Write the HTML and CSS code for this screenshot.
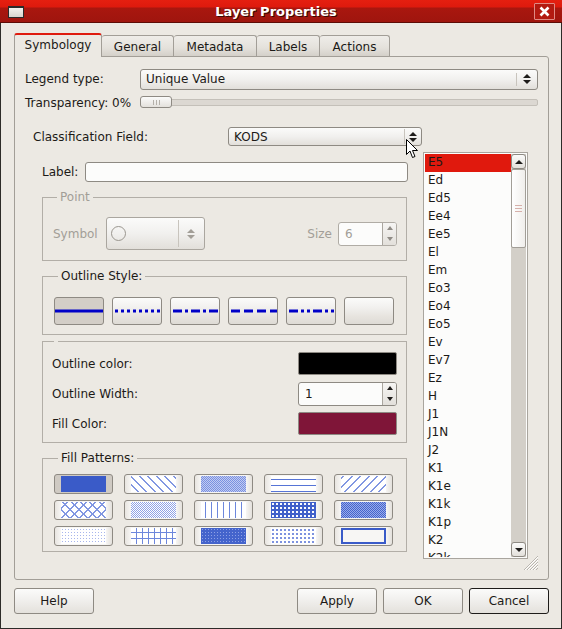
FILE: index.html
```html
<!DOCTYPE html>
<html lang="en">
<head>
    <meta charset="UTF-8">
    <title>Layer Properties</title>
    <link rel="stylesheet" href="styles.css">
</head>
<body>
    <div class="window">
        <div class="titlebar">
            <div class="win-icon"></div>
            <div class="win-title">Layer Properties</div>
            <div class="win-close">
                <svg width="11" height="11" viewBox="0 0 11 11"><path d="M1.5 1.5 L9.5 9.5 M9.5 1.5 L1.5 9.5" stroke="#fff" stroke-width="2.6"/></svg>
            </div>
        </div>

        <div class="dialog">
            <div class="tabs">
                <div class="tab active" style="width: 88px;">Symbology</div>
                <div class="tab" style="width: 72px;">General</div>
                <div class="tab" style="width: 83px;">Metadata</div>
                <div class="tab" style="width: 63px;">Labels</div>
                <div class="tab" style="width: 70px;">Actions</div>
            </div>

            <div class="panel">
                <div class="legend-row">
                    <div class="row-label">Legend type:</div>
                    <div class="combo wide">
                        <span class="combo-text">Unique Value</span>
                        <span class="combo-arrows"><i class="up"></i><i class="down"></i></span>
                    </div>
                </div>
                <div class="transp-row">
                    <div class="row-label">Transparency: 0%</div>
                    <div class="slider">
                        <div class="groove"></div>
                        <div class="handle"><i></i><i></i><i></i></div>
                    </div>
                </div>

                <div class="main">
                    <div class="left">
                        <div class="class-row">
                            <div class="class-label">Classification Field:</div>
                            <div class="combo field">
                                <span class="combo-text">KODS</span>
                                <span class="combo-arrows"><i class="up"></i><i class="down"></i></span>
                            </div>
                        </div>

                        <div class="sub">
                            <div class="label-row">
                                <span>Label:</span>
                                <div class="text-input"></div>
                            </div>

                            <fieldset class="group point">
                                <legend>Point</legend>
                                <div class="point-row">
                                    <span class="disabled">Symbol</span>
                                    <div class="combo symbol">
                                        <span class="circle"></span>
                                        <span class="combo-arrows"><i class="up"></i><i class="down"></i></span>
                                    </div>
                                    <span class="spacer"></span>
                                    <span class="disabled">Size</span>
                                    <div class="spin size">
                                        <span class="spin-text">6</span>
                                        <span class="spin-btns"><i class="up"></i><i class="down"></i></span>
                                    </div>
                                </div>
                            </fieldset>

                            <fieldset class="group outline">
                                <legend>Outline Style:</legend>
                                <div class="style-row">
                                    <div class="style-btn pressed">
                                        <svg width="48" height="6"><line x1="0" y1="3" x2="48" y2="3" stroke="#0000c8" stroke-width="3"/></svg>
                                    </div>
                                    <div class="style-btn">
                                        <svg width="48" height="6"><line x1="2" y1="3" x2="48" y2="3" stroke="#0000c8" stroke-width="3" stroke-dasharray="3 3"/></svg>
                                    </div>
                                    <div class="style-btn">
                                        <svg width="48" height="6"><line x1="2" y1="3" x2="48" y2="3" stroke="#0000c8" stroke-width="3" stroke-dasharray="9 3 3 3"/></svg>
                                    </div>
                                    <div class="style-btn">
                                        <svg width="48" height="6"><line x1="2" y1="3" x2="48" y2="3" stroke="#0000c8" stroke-width="3" stroke-dasharray="9 4"/></svg>
                                    </div>
                                    <div class="style-btn">
                                        <svg width="48" height="6"><line x1="2" y1="3" x2="48" y2="3" stroke="#0000c8" stroke-width="3" stroke-dasharray="9 3 3 3 3 3"/></svg>
                                    </div>
                                    <div class="style-btn"></div>
                                </div>
                            </fieldset>

                            <fieldset class="group colors">
                                <legend></legend>
                                <div class="color-row">
                                    <span>Outline color:</span>
                                    <div class="swatch" style="background-color: #000000;"></div>
                                </div>
                                <div class="color-row">
                                    <span>Outline Width:</span>
                                    <div class="spin width">
                                        <span class="spin-text">1</span>
                                        <span class="spin-btns"><i class="up"></i><i class="down"></i></span>
                                    </div>
                                </div>
                                <div class="color-row">
                                    <span>Fill Color:</span>
                                    <div class="swatch" style="background-color: #7f1538;"></div>
                                </div>
                            </fieldset>

                            <fieldset class="group fills">
                                <legend>Fill Patterns:</legend>
                                <div class="fill-grid">
                                    <div class="fill-btn pressed"><div class="fp fp-solid"></div></div>
                                    <div class="fill-btn"><div class="fp fp-bdiag"></div></div>
                                    <div class="fill-btn"><div class="fp fp-dense4"></div></div>
                                    <div class="fill-btn"><div class="fp fp-hor"></div></div>
                                    <div class="fill-btn"><div class="fp fp-fdiag"></div></div>
                                    <div class="fill-btn"><div class="fp fp-diagcross"></div></div>
                                    <div class="fill-btn"><div class="fp fp-dense5"></div></div>
                                    <div class="fill-btn"><div class="fp fp-ver"></div></div>
                                    <div class="fill-btn"><div class="fp fp-dense2"></div></div>
                                    <div class="fill-btn"><div class="fp fp-dense3"></div></div>
                                    <div class="fill-btn"><div class="fp fp-dense6"></div></div>
                                    <div class="fill-btn"><div class="fp fp-cross"></div></div>
                                    <div class="fill-btn"><div class="fp fp-dense1"></div></div>
                                    <div class="fill-btn"><div class="fp fp-dense7"></div></div>
                                    <div class="fill-btn"><div class="fp fp-none"></div></div>
                                </div>
                            </fieldset>
                        </div>
                    </div>

                    <div class="value-list">
                        <div class="items">
                            <div class="item selected">E5</div>
                            <div class="item">Ed</div>
                            <div class="item">Ed5</div>
                            <div class="item">Ee4</div>
                            <div class="item">Ee5</div>
                            <div class="item">El</div>
                            <div class="item">Em</div>
                            <div class="item">Eo3</div>
                            <div class="item">Eo4</div>
                            <div class="item">Eo5</div>
                            <div class="item">Ev</div>
                            <div class="item">Ev7</div>
                            <div class="item">Ez</div>
                            <div class="item">H</div>
                            <div class="item">J1</div>
                            <div class="item">J1N</div>
                            <div class="item">J2</div>
                            <div class="item">K1</div>
                            <div class="item">K1e</div>
                            <div class="item">K1k</div>
                            <div class="item">K1p</div>
                            <div class="item">K2</div>
                            <div class="item">K2k</div>
                        </div>
                        <div class="scrollbar">
                            <div class="sb-btn"><i class="up"></i></div>
                            <div class="sb-thumb"><i></i><i></i><i></i></div>
                            <div class="sb-track"></div>
                            <div class="sb-btn"><i class="down"></i></div>
                        </div>
                    </div>
                </div>

                <svg class="grip" width="18" height="18" viewBox="0 0 18 18">
                    <path d="M17 3 L3 17 M17 6 L6 17 M17 9 L9 17 M17 12 L12 17 M17 15 L15 17" stroke="#b9b5ae" stroke-width="1"/>
                    <path d="M17 4 L4 17 M17 7 L7 17 M17 10 L10 17 M17 13 L13 17" stroke="#ffffff" stroke-width="1"/>
                </svg>
            </div>

            <div class="buttons">
                <div class="button">Help</div>
                <div class="spacer"></div>
                <div class="button">Apply</div>
                <div class="button">OK</div>
                <div class="button default">Cancel</div>
            </div>
        </div>

        <svg class="cursor" width="13" height="20" viewBox="0 0 13 20">
            <path d="M0.5 0.5 L0.5 15.5 L4 12 L6.5 18.5 L9 17.5 L6.5 11.5 L11.5 11.5 Z" fill="#ffffff" stroke="#000000" stroke-width="1"/>
        </svg>
    </div>
</body>
</html>
```

FILE: styles.css
```css
body {
    margin: 0;
    padding: 0;
    font-family: "DejaVu Sans", Verdana, sans-serif;
    font-size: 12px;
    color: #1c1a17;
    background-color: #ece9e3;
}
.window {
    width: 562px;
    height: 629px;
    box-sizing: border-box;
    border: 1px solid #2d2b28;
    border-top: none;
    background-color: #ece9e3;
    position: relative;
    display: flex;
    flex-direction: column;
}

/* title bar */
.titlebar {
    height: 23px;
    margin: 0 -1px;
    background: linear-gradient(#e51f10 0, #de1a0d 7px, #a9170f 8px, #9f150e 100%);
    border-bottom: 1px solid #5c0c07;
    box-sizing: border-box;
    display: flex;
    align-items: center;
    position: relative;
}
.win-icon {
    width: 14px;
    height: 9px;
    margin-left: 8px;
    margin-top: 2px;
    background: linear-gradient(#f4f2ee, #d8d4ce);
    border: 1px solid #2a2a2a;
    border-top-width: 2px;
}
.win-title {
    flex: 1;
    text-align: center;
    color: #ffffff;
    font-weight: bold;
    font-size: 13px;
    text-shadow: 1px 1px 0 #3a0703;
    margin-right: 6px;
}
.win-close {
    width: 19px;
    height: 15px;
    margin-right: 7px;
    margin-top: 1px;
    border: 1px solid #e08a84;
    border-radius: 1px;
    background-color: #b31a11;
    display: flex;
    justify-content: center;
    align-items: center;
}

/* dialog body */
.dialog {
    flex: 1;
    padding: 10px 12px 0 13px;
    display: flex;
    flex-direction: column;
}
.tabs {
    display: flex;
    height: 23px;
    align-items: flex-end;
    position: relative;
    z-index: 1;
}
.tab {
    height: 21px;
    box-sizing: border-box;
    border: 1px solid #a29e97;
    border-bottom: none;
    border-left: none;
    border-radius: 3px 3px 0 0;
    background: linear-gradient(#efede9, #e4e1db 60%, #d4d0c9);
    display: flex;
    justify-content: center;
    align-items: center;
    padding-top: 1px;
}
.tab.active {
    height: 24px;
    margin-bottom: -1px;
    border: 1px solid #a29e97;
    border-top: 2px solid #df1b0e;
    border-bottom: none;
    background: #ece9e3;
    padding-top: 0;
    padding-bottom: 2px;
}
.panel {
    height: 524px;
    box-sizing: border-box;
    border: 1px solid #a29e97;
    border-radius: 0 3px 3px 3px;
    padding: 11px 10px 0 10px;
    position: relative;
}
.legend-row {
    display: flex;
    align-items: center;
    height: 22px;
}
.row-label {
    width: 115px;
    flex: none;
}
.transp-row {
    display: flex;
    align-items: center;
    height: 13px;
    margin-top: 6px;
}

/* combos */
.combo {
    box-sizing: border-box;
    border: 1px solid #8e8a83;
    border-radius: 3px;
    background: linear-gradient(#fbfbfa, #f1f0ee 50%, #e2dfda);
    display: flex;
    align-items: center;
    padding-left: 5px;
}
.combo.wide {
    flex: 1;
    height: 21px;
}
.combo-text {
    flex: 1;
}
.combo-arrows {
    width: 20px;
    align-self: stretch;
    margin: 3px 0;
    border-left: 1px solid #c8c4bd;
    display: flex;
    flex-direction: column;
    justify-content: center;
    align-items: center;
    gap: 2px;
}
i.up, i.down {
    display: block;
    width: 0;
    height: 0;
    border-left: 4px solid transparent;
    border-right: 4px solid transparent;
}
i.up {
    border-bottom: 4px solid #1e1c1a;
}
i.down {
    border-top: 4px solid #1e1c1a;
}

/* slider */
.slider {
    flex: 1;
    height: 13px;
    position: relative;
    display: flex;
    align-items: center;
}
.groove {
    flex: 1;
    height: 5px;
    border: 1px solid #c4c0b9;
    background-color: #dcd8d2;
    border-radius: 2px;
}
.handle {
    position: absolute;
    left: 0;
    top: 0;
    width: 32px;
    height: 12px;
    box-sizing: border-box;
    border: 1px solid #8e8a83;
    border-radius: 3px;
    background: linear-gradient(#fbfbfa, #e4e1dc);
    display: flex;
    justify-content: center;
    align-items: center;
    gap: 2px;
}
.handle i {
    width: 1px;
    height: 5px;
    background-color: #b5b1aa;
}

/* main area */
.main {
    display: flex;
    margin-top: 18px;
}
.left {
    width: 397px;
    flex: none;
}
.class-row {
    display: flex;
    align-items: center;
    height: 19px;
}
.class-label {
    width: 195px;
    padding-left: 8px;
}
.combo.field {
    width: 194px;
    height: 19px;
}
.combo.field .combo-arrows {
    margin: 1px 0;
    width: 16px;
}
.sub {
    padding-left: 17px;
    width: 366px;
}
.label-row {
    display: flex;
    align-items: center;
    margin-top: 16px;
    height: 20px;
}
.text-input {
    flex: 1;
    margin-left: 7px;
    height: 20px;
    box-sizing: border-box;
    border: 1px solid #8e8a83;
    border-radius: 3px;
    background-color: #fcfcfb;
}

/* groups */
.group {
    margin: 0;
    width: 365px;
    box-sizing: border-box;
    border: 1px solid #b2aea7;
    padding: 0 9px 0 10px;
}
.group legend {
    padding: 0 3px;
    margin-left: 4px;
    line-height: 14px;
}
.group.point {
    margin-top: 8px;
    padding-top: 13px;
    padding-bottom: 10px;
}
.group.point legend {
    color: #a29e97;
}
.disabled {
    color: #a29e97;
}
.point-row {
    display: flex;
    align-items: center;
}
.point-row .spacer {
    flex: 1;
}
.combo.symbol {
    width: 99px;
    height: 33px;
    margin-left: 8px;
    padding-left: 4px;
    border-color: #aaa69f;
}
.circle {
    flex: 1;
    height: 16px;
    display: block;
    position: relative;
}
.circle::before {
    content: "";
    display: block;
    width: 15px;
    height: 15px;
    border: 1px solid #9a968f;
    border-radius: 50%;
    box-sizing: border-box;
}
.combo.symbol .combo-arrows {
    margin: 2px 0;
    width: 25px;
}
.combo.symbol i.up {
    border-bottom-color: #a29e97;
}
.combo.symbol i.down {
    border-top-color: #a29e97;
}
.spin {
    box-sizing: border-box;
    border: 1px solid #8e8a83;
    border-radius: 3px;
    background-color: #fcfcfb;
    display: flex;
    align-items: stretch;
}
.spin-text {
    flex: 1;
    padding-left: 6px;
    display: flex;
    align-items: center;
}
.spin-btns {
    width: 13px;
    border-left: 1px solid #aaa69f;
    display: flex;
    flex-direction: column;
    background: linear-gradient(#f6f5f3, #e3e0db);
    border-radius: 0 2px 2px 0;
}
.spin-btns i {
    margin: auto;
    border-left-width: 3px;
    border-right-width: 3px;
}
.spin-btns i.up {
    border-bottom-width: 4px;
}
.spin-btns i.down {
    border-top-width: 4px;
}
.spin.size {
    width: 59px;
    height: 24px;
    margin-left: 6px;
    border-color: #b0aca5;
    color: #a29e97;
}
.spin.size i.up {
    border-bottom-color: #8f8b85;
}
.spin.size i.down {
    border-top-color: #8f8b85;
}
.group.outline {
    margin-top: 8px;
    padding-top: 14px;
    padding-bottom: 9px;
    padding-left: 11px;
}
.style-row {
    display: flex;
    gap: 8px;
}
.style-btn {
    width: 50px;
    height: 28px;
    box-sizing: border-box;
    border: 1px solid #8e8a83;
    border-radius: 3px;
    background: linear-gradient(#fbfbfa 0, #f2f1ef 35%, #e7e4df 70%, #dedbd5 100%);
    display: flex;
    justify-content: center;
    align-items: center;
}
.style-btn.pressed {
    background: #d3cec7;
}
.group.colors {
    margin-top: 6px;
    padding-top: 10px;
    padding-bottom: 7px;
    padding-left: 9px;
}
.group.colors legend {
    padding: 0 2px;
    margin-left: 2px;
    line-height: 0;
}
.color-row {
    display: flex;
    align-items: center;
    justify-content: space-between;
    height: 23px;
    margin-bottom: 7px;
}
.color-row:last-child {
    margin-bottom: 0;
}
.swatch {
    width: 99px;
    height: 23px;
    box-sizing: border-box;
    border: 1px solid #8e8a83;
    border-radius: 2px;
}
.spin.width {
    width: 99px;
    height: 24px;
}
.group.fills {
    margin-top: 8px;
    padding-top: 9px;
    padding-bottom: 5px;
    padding-left: 11px;
}
.fill-grid {
    display: grid;
    grid-template-columns: repeat(5, 59px);
    column-gap: 11px;
    row-gap: 6px;
}
.fill-btn {
    height: 20px;
    box-sizing: border-box;
    border: 1px solid #8e8a83;
    border-radius: 3px;
    background: linear-gradient(90deg, #e8e5e0 0, #f7f6f4 6px, #f7f6f4 51px, #e4e1dc 100%);
    padding: 1px 6px;
}
.fill-btn.pressed {
    background: #cfcac3;
}
.fp {
    height: 100%;
    background-color: #ffffff;
}
.fp-solid {
    background-color: #3a5bc8;
}
.fp-bdiag {
    background-image: repeating-linear-gradient(45deg, #ffffff 0 4.5px, #8197e2 4.5px 6px);
}
.fp-fdiag {
    background-image: repeating-linear-gradient(-45deg, #ffffff 0 4.5px, #8197e2 4.5px 6px);
}
.fp-diagcross {
    background-image: repeating-linear-gradient(45deg, transparent 0 5px, #8197e2 5px 6.5px),
        repeating-linear-gradient(-45deg, transparent 0 5px, #8197e2 5px 6.5px);
}
.fp-hor {
    background-image: repeating-linear-gradient(#ffffff 0 3px, #5674d6 3px 4px, #ffffff 4px 6px);
}
.fp-ver {
    background-image: repeating-linear-gradient(90deg, #ffffff 0 4px, #6d87dc 4px 5px, #ffffff 5px 6px);
}
.fp-cross {
    background-image: repeating-linear-gradient(transparent 0 4px, #6d87dc 4px 5px, transparent 5px 6px),
        repeating-linear-gradient(90deg, transparent 0 5px, #6d87dc 5px 6px, transparent 6px 6px);
}
.fp-dense4 {
    background-image: repeating-conic-gradient(#7a91e0 0 25%, #c1cbf2 0 50%);
    background-size: 2px 2px;
}
.fp-dense5 {
    background-image: repeating-conic-gradient(#8fa2e6 0 25%, #ffffff 0 50%);
    background-size: 2px 2px;
}
.fp-dense3 {
    background-image: repeating-conic-gradient(#4464cc 0 25%, #9aabea 0 50%);
    background-size: 2px 2px;
}
.fp-dense2 {
    background-color: #3f5fca;
    background-image: radial-gradient(circle, #ffffff 0 0.7px, transparent 1px);
    background-size: 4px 4px;
}
.fp-dense1 {
    background-color: #4464cc;
    background-image: radial-gradient(circle, #8da0e5 0 0.7px, transparent 1px);
    background-size: 3px 3px;
}
.fp-dense6 {
    background-image: radial-gradient(circle, #a8b6ec 0 0.8px, transparent 1px);
    background-size: 3px 3px;
}
.fp-dense7 {
    background-image: radial-gradient(circle, #7a90df 0 0.7px, transparent 1px);
    background-size: 4px 4px;
}
.fp-none {
    background: transparent;
    border: 2px solid #3a5bc8;
    box-sizing: border-box;
}

/* value list */
.value-list {
    width: 105px;
    height: 407px;
    margin-top: 25px;
    margin-left: 1px;
    box-sizing: border-box;
    border: 1px solid #a9a59e;
    background-color: #fcfcfb;
    display: flex;
    padding: 1px 1px 1px 1px;
}
.items {
    flex: 1;
    overflow: hidden;
}
.item {
    height: 18px;
    line-height: 17px;
    padding-left: 3px;
    font-size: 12px;
}
.item.selected {
    background-color: #e0190d;
}
.scrollbar {
    width: 15px;
    display: flex;
    flex-direction: column;
    background-color: #d3cfc8;
}
.sb-btn {
    height: 15px;
    box-sizing: border-box;
    border: 1px solid #8e8a83;
    border-radius: 3px;
    background: linear-gradient(#fbfbfa, #e3e0db);
    display: flex;
    justify-content: center;
    align-items: center;
}
.sb-btn i.up, .sb-btn i.down {
    border-left-width: 4px;
    border-right-width: 4px;
}
.sb-thumb {
    height: 79px;
    box-sizing: border-box;
    border: 1px solid #a29e97;
    border-radius: 2px;
    background: linear-gradient(90deg, #ffffff, #f0eeeb);
    display: flex;
    flex-direction: column;
    justify-content: center;
    align-items: center;
    gap: 2px;
}
.sb-thumb i {
    width: 7px;
    height: 1px;
    background-color: #d6b0aa;
}
.sb-track {
    flex: 1;
}
.grip {
    position: absolute;
    right: 9px;
    bottom: 8px;
}

/* bottom buttons */
.buttons {
    display: flex;
    gap: 6px;
    margin-top: 8px;
    height: 26px;
}
.buttons .spacer {
    flex: 1;
}
.button {
    width: 80px;
    box-sizing: border-box;
    border: 1px solid #8e8a83;
    border-radius: 3px;
    background: linear-gradient(#fbfbfa 0, #f2f1ef 40%, #e4e1dc 100%);
    display: flex;
    justify-content: center;
    align-items: center;
}
.button.default {
    border-color: #1e1c1a;
}
.cursor {
    position: absolute;
    left: 405px;
    top: 139px;
}
```
